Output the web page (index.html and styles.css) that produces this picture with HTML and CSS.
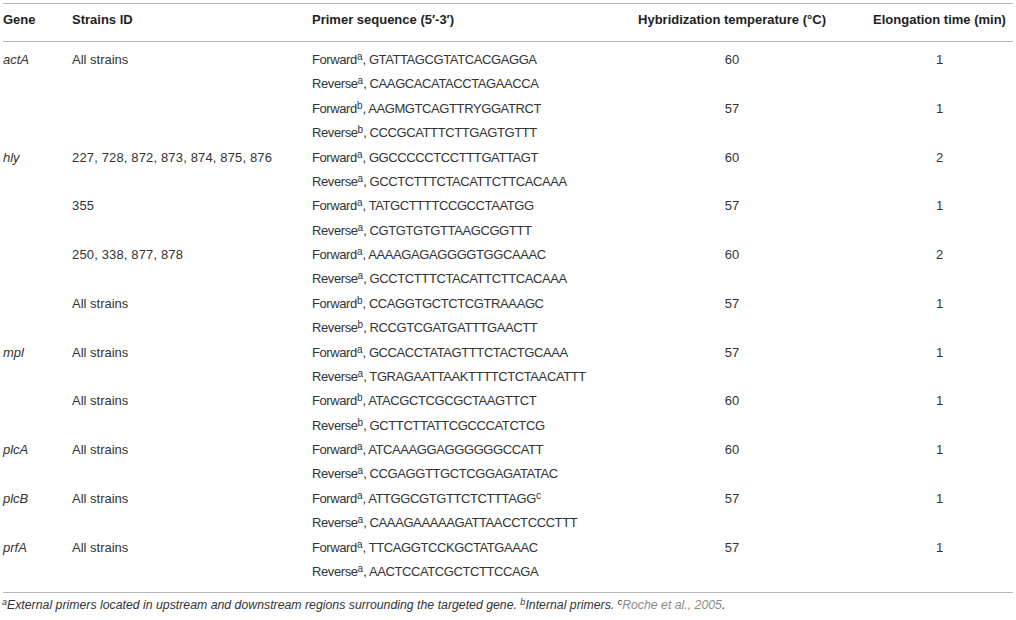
FILE: index.html
```html
<!DOCTYPE html>
<html>
<head>
<meta charset="utf-8">
<link rel="stylesheet" href="styles.css">
</head>
<body>
<table class="primers">
  <colgroup>
    <col class="c-gene"><col class="c-strain"><col class="c-seq"><col class="c-temp"><col class="c-time">
  </colgroup>
  <thead>
    <tr>
      <th class="left">Gene</th>
      <th class="left">Strains ID</th>
      <th class="left">Primer sequence (5′-3′)</th>
      <th class="center">Hybridization temperature (°C)</th>
      <th class="center time">Elongation time (min)</th>
    </tr>
  </thead>
  <tbody>
    <tr><td class="gene">actA</td><td>All strains</td><td class="seq">Forward<sup>a</sup>, GTATTAGCGTATCACGAGGA</td><td class="center">60</td><td class="center time">1</td></tr>
    <tr><td></td><td></td><td class="seq">Reverse<sup>a</sup>, CAAGCACATACCTAGAACCA</td><td></td><td></td></tr>
    <tr><td></td><td></td><td class="seq">Forward<sup>b</sup>, AAGMGTCAGTTRYGGATRCT</td><td class="center">57</td><td class="center time">1</td></tr>
    <tr><td></td><td></td><td class="seq">Reverse<sup>b</sup>, CCCGCATTTCTTGAGTGTTT</td><td></td><td></td></tr>
    <tr><td class="gene">hly</td><td class="num">227, 728, 872, 873, 874, 875, 876</td><td class="seq">Forward<sup>a</sup>, GGCCCCCTCCTTTGATTAGT</td><td class="center">60</td><td class="center time">2</td></tr>
    <tr><td></td><td></td><td class="seq">Reverse<sup>a</sup>, GCCTCTTTCTACATTCTTCACAAA</td><td></td><td></td></tr>
    <tr><td></td><td class="num">355</td><td class="seq">Forward<sup>a</sup>, TATGCTTTTCCGCCTAATGG</td><td class="center">57</td><td class="center time">1</td></tr>
    <tr><td></td><td></td><td class="seq">Reverse<sup>a</sup>, CGTGTGTGTTAAGCGGTTT</td><td></td><td></td></tr>
    <tr><td></td><td class="num">250, 338, 877, 878</td><td class="seq">Forward<sup>a</sup>, AAAAGAGAGGGGTGGCAAAC</td><td class="center">60</td><td class="center time">2</td></tr>
    <tr><td></td><td></td><td class="seq">Reverse<sup>a</sup>, GCCTCTTTCTACATTCTTCACAAA</td><td></td><td></td></tr>
    <tr><td></td><td>All strains</td><td class="seq">Forward<sup>b</sup>, CCAGGTGCTCTCGTRAAAGC</td><td class="center">57</td><td class="center time">1</td></tr>
    <tr><td></td><td></td><td class="seq">Reverse<sup>b</sup>, RCCGTCGATGATTTGAACTT</td><td></td><td></td></tr>
    <tr><td class="gene">mpl</td><td>All strains</td><td class="seq">Forward<sup>a</sup>, GCCACCTATAGTTTCTACTGCAAA</td><td class="center">57</td><td class="center time">1</td></tr>
    <tr><td></td><td></td><td class="seq">Reverse<sup>a</sup>, TGRAGAATTAAKTTTTCTCTAACATTT</td><td></td><td></td></tr>
    <tr><td></td><td>All strains</td><td class="seq">Forward<sup>b</sup>, ATACGCTCGCGCTAAGTTCT</td><td class="center">60</td><td class="center time">1</td></tr>
    <tr><td></td><td></td><td class="seq">Reverse<sup>b</sup>, GCTTCTTATTCGCCCATCTCG</td><td></td><td></td></tr>
    <tr><td class="gene">plcA</td><td>All strains</td><td class="seq">Forward<sup>a</sup>, ATCAAAGGAGGGGGGCCATT</td><td class="center">60</td><td class="center time">1</td></tr>
    <tr><td></td><td></td><td class="seq">Reverse<sup>a</sup>, CCGAGGTTGCTCGGAGATATAC</td><td></td><td></td></tr>
    <tr><td class="gene">plcB</td><td>All strains</td><td class="seq">Forward<sup>a</sup>, ATTGGCGTGTTCTCTTTAGG<sup>c</sup></td><td class="center">57</td><td class="center time">1</td></tr>
    <tr><td></td><td></td><td class="seq">Reverse<sup>a</sup>, CAAAGAAAAAGATTAACCTCCCTTT</td><td></td><td></td></tr>
    <tr><td class="gene">prfA</td><td>All strains</td><td class="seq">Forward<sup>a</sup>, TTCAGGTCCKGCTATGAAAC</td><td class="center">57</td><td class="center time">1</td></tr>
    <tr><td></td><td></td><td class="seq">Reverse<sup>a</sup>, AACTCCATCGCTCTTCCAGA</td><td></td><td></td></tr>
  </tbody>
</table>
<p class="notes"><sup>a</sup>External primers located in upstream and downstream regions surrounding the targeted gene. <sup>b</sup>Internal primers. <sup>c</sup><span class="ref">Roche et al., 2005</span>.</p>
</body>
</html>
```
FILE: styles.css
```css
html, body {
  margin: 0;
  padding: 0;
  background: #ffffff;
}

body {
  font-family: "Liberation Sans", Arial, sans-serif;
  color: #333333;
}

.primers {
  margin: 3px 0 0 3px;
  width: 1010px;
  border-collapse: collapse;
  table-layout: fixed;
  font-size: 13px;
  border-top: 1px solid #b4b4b4;
  border-bottom: 1px solid #b4b4b4;
}

.c-gene { width: 69px; }
.c-strain { width: 240px; }
.c-seq { width: 298px; }
.c-temp { width: 244px; }
.c-time { width: 159px; }

.primers th {
  font-weight: bold;
  color: #1e1e1e;
  line-height: 16px;
  padding: 8px 0 13px 0;
  border-bottom: 1px solid #b4b4b4;
  white-space: nowrap;
}

.primers td {
  padding: 0;
  line-height: 24.38px;
  white-space: nowrap;
  vertical-align: middle;
}

.primers tbody tr:first-child td {
  padding-top: 6px;
}

.primers tbody tr:last-child td {
  padding-bottom: 8px;
}

.left { text-align: left; }
.center { text-align: center; }
.time { padding-left: 12px !important; }

.gene { font-style: italic; }

.seq { letter-spacing: -0.4px; }
.num { letter-spacing: 0.15px; }

sup {
  font-size: 10px;
  line-height: 0;
  vertical-align: 4px;
  letter-spacing: 0;
}

.notes {
  margin: 4px 0 0 2px;
  font-size: 12.3px;
  font-style: italic;
  line-height: 16px;
  color: #333333;
}

.notes sup {
  font-size: 9px;
  vertical-align: 4px;
}

.ref {
  color: #8a8a8a;
}
```
